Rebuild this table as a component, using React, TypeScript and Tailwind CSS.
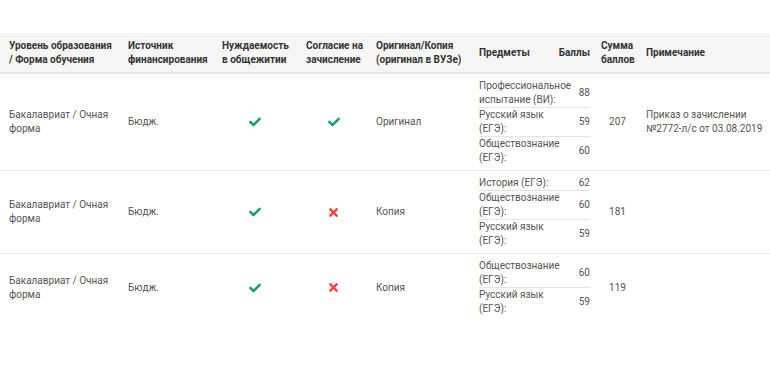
import { FaCheck, FaTimes } from "react-icons/fa";

type Subject = { name: string; score: number };
type Row = {
  level: string;
  source: string;
  dorm: boolean;
  consent: boolean;
  original: string;
  subjects: Subject[];
  total: number;
  note?: string;
};

const rows: Row[] = [
  {
    level: "Бакалавриат / Очная форма",
    source: "Бюдж.",
    dorm: true,
    consent: true,
    original: "Оригинал",
    subjects: [
      { name: "Профессиональное испытание (ВИ):", score: 88 },
      { name: "Русский язык (ЕГЭ):", score: 59 },
      { name: "Обществознание (ЕГЭ):", score: 60 },
    ],
    total: 207,
    note: "Приказ о зачислении №2772-л/с от 03.08.2019",
  },
  {
    level: "Бакалавриат / Очная форма",
    source: "Бюдж.",
    dorm: true,
    consent: false,
    original: "Копия",
    subjects: [
      { name: "История (ЕГЭ):", score: 62 },
      { name: "Обществознание (ЕГЭ):", score: 60 },
      { name: "Русский язык (ЕГЭ):", score: 59 },
    ],
    total: 181,
  },
  {
    level: "Бакалавриат / Очная форма",
    source: "Бюдж.",
    dorm: true,
    consent: false,
    original: "Копия",
    subjects: [
      { name: "Обществознание (ЕГЭ):", score: 60 },
      { name: "Русский язык (ЕГЭ):", score: 59 },
    ],
    total: 119,
  },
];

function Mark({ ok }: { ok: boolean }) {
  return ok ? (
    <FaCheck className="inline-block text-[#16977f]" size={12} />
  ) : (
    <FaTimes className="inline-block text-[#f4433c]" size={13} />
  );
}

export default function App() {
  return (
    <div
      className="w-[770px] min-h-[366px] bg-white pt-[33px] text-[10px] leading-[14px] text-[#555]"
      style={{ fontFamily: "Roboto, 'Noto Sans', sans-serif" }}
    >
      <table className="w-full table-fixed border-collapse">
        <colgroup>
          <col className="w-[119px]" />
          <col className="w-[94px]" />
          <col className="w-[84px]" />
          <col className="w-[70px]" />
          <col className="w-[103px]" />
          <col className="w-[122px]" />
          <col className="w-[45px]" />
          <col />
        </colgroup>
        <thead>
          {/* шапка таблицы */}
          <tr className="bg-[#f5f5f5] border-b-2 border-[#e6e6e6] font-bold text-[#333] text-left align-middle">
            <th className="h-[40px] pl-[9px] pr-[1px] font-bold">Уровень образования / Форма обучения</th>
            <th className="pl-[9px] pr-[4px] font-bold">Источник финансирования</th>
            <th className="pl-[9px] pr-[9px] font-bold">Нуждаемость в общежитии</th>
            <th className="pl-[9px] pr-[3px] font-bold">Согласие на зачисление</th>
            <th className="pl-[9px] pr-[4px] font-bold">Оригинал/Копия (оригинал в ВУЗе)</th>
            <th className="pl-[9px] pr-[2px] font-bold">
              <div className="flex justify-between">
                <span>Предметы</span>
                <span>Баллы</span>
              </div>
            </th>
            <th className="pl-[9px] pr-[3px] font-bold text-left">Сумма баллов</th>
            <th className="pl-[9px] font-bold">Примечание</th>
          </tr>
        </thead>
        <tbody>
          {rows.map((r, i) => (
            <tr key={i} className={i < rows.length - 1 ? "border-b border-[#e8e8e8]" : ""}>
              <td className="pl-[9px] pr-[9px] align-middle">{r.level}</td>
              <td className="pl-[9px] pr-[4px] align-middle">{r.source}</td>
              <td className="pl-[9px] pr-[9px] align-middle text-center">
                <Mark ok={r.dorm} />
              </td>
              <td className="pl-[9px] pr-[6px] align-middle text-center">
                <Mark ok={r.consent} />
              </td>
              <td className="pl-[9px] pr-[4px] align-middle">{r.original}</td>
              <td className="pl-[9px] pr-[2px] py-[5px] align-middle">
                <div className="flex flex-col">
                  {r.subjects.map((s, j) => (
                    <div
                      key={j}
                      className={
                        "flex items-center " +
                        (j < r.subjects.length - 1 ? "border-b border-[#e4e4e4]" : "")
                      }
                    >
                      <div className="w-[92px]">{s.name}</div>
                      <div className="flex-1 text-right">{s.score}</div>
                    </div>
                  ))}
                </div>
              </td>
              <td className="pl-[9px] pr-[3px] align-middle text-center">{r.total}</td>
              <td className="pl-[9px] align-middle">{r.note}</td>
            </tr>
          ))}
        </tbody>
      </table>
    </div>
  );
}
